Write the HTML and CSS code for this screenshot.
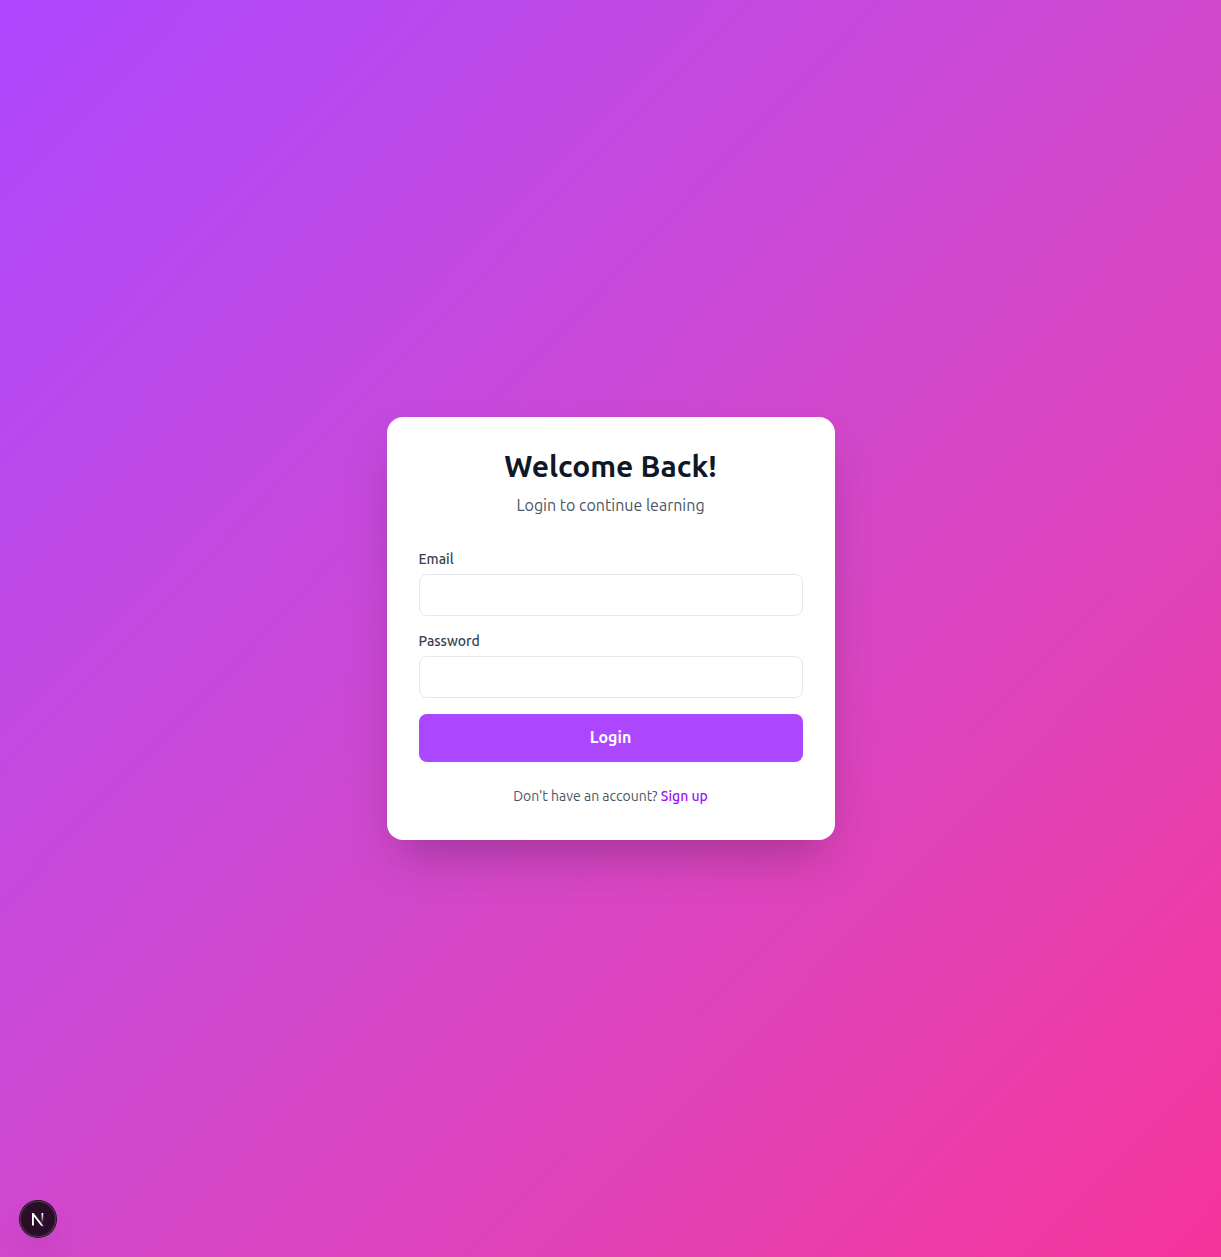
FILE: index.html
```html
<!DOCTYPE html>
<html lang="en">
<head>
<meta charset="utf-8">
<title>Login</title>
<link rel="stylesheet" href="styles.css">
</head>
<body>
<main class="page">
  <section class="card">
    <header class="card-header">
      <h1 class="title">Welcome Back!</h1>
      <p class="subtitle">Login to continue learning</p>
    </header>
    <form class="form">
      <div class="field">
        <label class="label" for="email">Email</label>
        <input class="input" id="email" type="email">
      </div>
      <div class="field">
        <label class="label" for="password">Password</label>
        <input class="input" id="password" type="password">
      </div>
      <button class="button" type="submit">Login</button>
    </form>
    <p class="signup">Don't have an account? <a class="link" href="#">Sign up</a></p>
  </section>
</main>
<button class="dev-badge" aria-label="Open developer tools">
  <svg width="36" height="36" viewBox="0 0 36 36" fill="none">
    <defs>
      <linearGradient id="diag" x1="9.956" y1="11.123" x2="15.478" y2="17.967" gradientUnits="userSpaceOnUse"><stop stop-color="#fff"/><stop offset="1" stop-color="#fff" stop-opacity="0"/></linearGradient>
      <linearGradient id="stem" x1="11.822" y1="1.4" x2="11.791" y2="10.5" gradientUnits="userSpaceOnUse"><stop stop-color="#fff"/><stop offset="1" stop-color="#fff" stop-opacity="0"/></linearGradient>
      <clipPath id="bounds"><path d="M0 .3H13V13.6H0Z"/></clipPath>
    </defs>
    <g transform="translate(10.6 11.7)">
      <g clip-path="url(#bounds)" stroke-width="1.86">
        <path d="M13.3 15.2L2.34 1V12.9" stroke="url(#diag)"/>
        <path d="M11.825 .3V13.1" stroke="url(#stem)"/>
      </g>
    </g>
  </svg>
</button>
</body>
</html>
```
FILE: styles.css
```css
* { box-sizing: border-box; margin: 0; }
body { font-family: Ubuntu, "Open Sans", "Noto Sans", sans-serif; }
.page { min-height: 100vh; display: flex; align-items: center; justify-content: center; background: linear-gradient(to bottom right in oklab, #ad46ff, #f6339a); }
.card { width: 448px; padding: 31px 32px 34px; border-radius: 16px; background: #fff; box-shadow: 0 25px 50px -12px rgba(0,0,0,.25); }
.card-header { margin-bottom: 32px; text-align: center; }
.title { margin-bottom: 9px; font-size: 30px; line-height: 36px; font-weight: 700; color: #101828; }
.subtitle { font-size: 16px; line-height: 24px; color: #4a5565; }
.form { display: flex; flex-direction: column; gap: 15px; }
.label { display: block; margin-bottom: 5px; font-size: 14px; line-height: 20px; font-weight: 500; color: #364153; }
.input { display: block; width: 100%; height: 42px; padding: 8px 16px; border: 1px solid #e5e7eb; border-radius: 8px; background: #fff; font: inherit; }
.button { height: 48px; margin-top: 1px; padding: 0 0 2px; border: 0; border-radius: 8px; background: #ad46ff; color: #fff; font: 600 16px/24px Ubuntu, "Open Sans", sans-serif; }
.signup { margin-top: 24px; text-align: center; font-size: 14px; line-height: 20px; color: #4a5565; }
.link { color: #9810fa; font-weight: 500; text-decoration: none; }
.dev-badge { position: fixed; left: 20px; bottom: 20px; width: 36px; height: 36px; padding: 0; border: 0; border-radius: 50%; background: rgba(0,0,0,.8); box-shadow: 0 0 0 1px #171717, inset 0 0 0 1px rgba(255,255,255,.14), 0 16px 32px -8px rgba(0,0,0,.24); }
.dev-badge svg { display: block; }
```
